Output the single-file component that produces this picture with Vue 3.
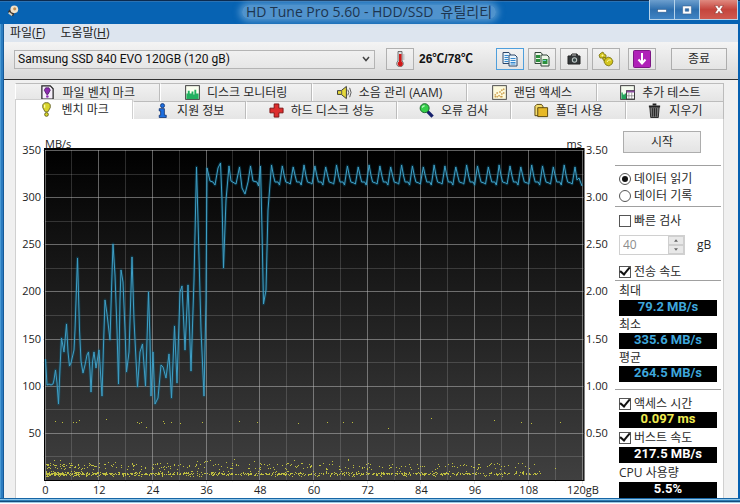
<script setup>
import { ref } from 'vue'

const drive = ref('Samsung SSD 840 EVO 120GB (120 gB)')
const mode = ref('read')
const shortTest = ref(false)
const transfer = ref(true)
const access = ref(true)
const burst = ref(true)

const backTabs = [
  { icon: 'file', label: '파일 벤치 마크' },
  { icon: 'monitor', label: '디스크 모니터링' },
  { icon: 'sound', label: '소음 관리 (AAM)' },
  { icon: 'random', label: '랜덤 액세스' },
  { icon: 'extra', label: '추가 테스트' },
]
const frontTabs = [
  { icon: 'bench', label: '벤치 마크' },
  { icon: 'info', label: '지원 정보' },
  { icon: 'health', label: '하드 디스크 성능' },
  { icon: 'search', label: '오류 검사' },
  { icon: 'folder', label: '폴더 사용' },
  { icon: 'trash', label: '지우기' },
]

const X0 = 45.5
const Y0 = 480
const xOf = (gb) => X0 + gb * 4.475
const yOf = (mb) => Y0 - mb * 0.943

const xLabels = [0, 12, 24, 36, 48, 60, 72, 84, 96, 108]
const yLabels = [50, 100, 150, 200, 250, 300, 350]
const xLines = Array.from({ length: 21 }, (_, i) => ({ x: Math.round(xOf(i * 6)) - 0.5, major: i % 2 === 0 }))
const yLines = Array.from({ length: 14 }, (_, i) => ({ y: Math.round(yOf((i + 1) * 25)) + 0.5, major: i % 2 === 1 }))

const points = [
  [45.5, 359], [47, 385], [49, 384], [51, 385], [53, 384], [54, 380], [55.5, 370], [57, 383], [58.5, 404],
  [60, 368], [61.5, 338], [64, 352], [66.5, 324], [68, 352], [69.5, 366], [71, 363], [74, 350], [75, 330],
  [77.5, 258], [79.5, 330], [81, 361], [83, 373], [85, 365], [87, 355], [88.5, 352], [90, 370], [91, 392],
  [92.5, 362], [94, 352], [96, 368], [99, 350], [100, 365], [102, 396], [103.5, 345], [105, 300], [107, 314],
  [110, 340], [111.5, 290], [113, 244], [115, 275], [117, 330], [118.5, 384], [120, 300], [121, 270], [123, 282],
  [125, 330], [126.5, 372], [129, 352], [131, 290], [132, 257], [134, 320], [136, 360], [137.5, 387],
  [140, 352], [142.5, 344], [144, 365], [145.5, 386], [147, 340], [148.5, 292], [150, 340], [151, 396],
  [153, 352], [155, 404], [158, 398], [161, 365], [163, 367], [166, 378], [169, 354], [171.5, 398],
  [174.5, 326], [177, 383], [180, 292], [182, 286], [185, 350], [188, 285], [191, 371], [194, 280],
  [196.5, 167], [198, 220], [201, 330], [204, 396], [206, 300], [207, 168], [210, 181], [213, 182], [215, 185],
  [218, 168], [220.5, 163], [222, 200], [223.5, 268], [226, 200], [229, 166], [231, 181], [236, 184],
  [239.5, 167], [242, 188], [245, 194], [248, 182], [250.5, 166], [253, 181], [257, 182], [258.5, 186],
  [260.5, 166], [262, 230], [263.5, 304], [266, 290], [268, 210],
]
for (let i = 0; i < 28; i++) {
  const x = 271.5 + i * 10.84
  points.push([x, 165 + (i % 3)], [x + 2, 176], [x + 3.5, 182], [x + 6.5, 182 + (i % 2)], [x + 8, 185 - (i % 2)], [x + 9.5, 175])
}
points.push([575, 167], [577, 180], [579, 178], [582, 186])
const speedLine = points.map((p) => p.map((n) => n.toFixed(1)).join(',')).join(' ')

let seed = 97
const rand = () => {
  seed = (seed * 16807) % 2147483647
  return seed / 2147483647
}
const dots = []
for (let i = 0; i < 1150; i++) {
  const x = 46 + Math.pow(rand(), 1.5) * 495
  const band = rand()
  const y = band < 0.45 ? 473 + Math.floor(rand() * 2) : band < 0.78 ? 471 + rand() * 5 : 463 + rand() * 6
  dots.push([Math.round(x), Math.round(y)])
}
for (let i = 0; i < 16; i++) dots.push([Math.round(50 + rand() * 430), Math.round(459 + rand() * 3)])
dots.push(
  [55, 421], [62, 422], [73, 422], [76, 422], [79, 420], [106, 419], [137, 422], [139, 423], [141, 422], [146, 427],
  [163, 421], [164, 423], [171, 422], [180, 423], [202, 422], [239, 421], [257, 422], [298, 423], [327, 422],
  [343, 422], [352, 422], [388, 428], [431, 418], [494, 420], [521, 422], [531, 423], [560, 422], [555, 468],
)
const dotPath = dots.map(([x, y]) => `M${x} ${y}h1v1h-1z`).join('')
</script>

<template>
  <div class="window">
    <header class="titlebar">
      <svg class="app-icon" viewBox="0 0 14 14" aria-hidden="true">
        <path d="M1 8l5-6 5 3-4 8z" fill="#3c342e" />
        <circle cx="8.500" cy="5" r="4.500" fill="#eee0c8" /><circle cx="9" cy="4.500" r="1.800" fill="#c08e50" />
        <path d="M2 9l4 3" stroke="#d9d2c0" stroke-width="2" />
      </svg>
      <h1 class="title">HD Tune Pro 5.60 - HDD/SSD&nbsp; 유틸리티</h1>
      <div class="win-controls">
        <button type="button" aria-label="최소화">
          <svg viewBox="0 0 16 14"><rect x="3" y="7" width="10" height="3" fill="#fff" stroke="#335b88" stroke-width=".6" /></svg>
        </button>
        <button type="button" aria-label="최대화">
          <svg viewBox="0 0 16 14"><path d="M3 3h10v9H3zM6 6v3h4V6z" fill="#fff" fill-rule="evenodd" stroke="#335b88" stroke-width=".6" /></svg>
        </button>
        <button type="button" class="close" aria-label="닫기">
          <svg viewBox="0 0 16 14"><path d="M3 2.500h3.500L8 5l1.500-2.500H13L10 7l3 4.500H9.500L8 9l-1.500 2.500H3L6 7z" fill="#fff" stroke="#7a2622" stroke-width=".6" /></svg>
        </button>
      </div>
    </header>

    <div class="client">
      <nav class="menu">
        <a href="#file">파일(<u>F</u>)</a>
        <a href="#help">도움말(<u>H</u>)</a>
      </nav>

      <div class="toolbar">
        <div class="combo">
          <select v-model="drive" aria-label="드라이브">
            <option>Samsung SSD 840 EVO 120GB (120 gB)</option>
          </select>
          <svg viewBox="0 0 8 6" aria-hidden="true"><path d="M1 1l3 3.500L7 1" fill="none" stroke="#444" stroke-width="1.500" /></svg>
        </div>
        <button type="button" class="tool" aria-label="온도">
          <svg viewBox="0 0 16 16"><path d="M6 .5h4V10a3.300 3.300 0 1 1-4 0z" fill="#ddd" stroke="#555" stroke-width=".8" /><path d="M7 3h2.500v7.500a2.600 2.600 0 1 1-2.500 0z" fill="#d01818" /><path d="M10.500 4h2M10.500 6h2M10.500 8h2" stroke="#888" stroke-width=".7" /></svg>
        </button>
        <span class="temp">26℃/78℃</span>
        <div class="tools">
          <button type="button" class="tool focus" aria-label="텍스트 복사">
            <svg viewBox="0 0 16 16"><g fill="#e8f3fb" stroke="#2d4668"><path d="M1 1.500h6l1.500 2v9H1z" /><path d="M7 4h6l2 2v9H7z" /></g><path d="M2.500 4.500h4M2.500 6.500h4M2.500 8.500h4M2.500 10.500h4M8.500 7.500h5M8.500 9.500h5M8.500 11.500h5M8.500 13h5" stroke="#3689cf" /></svg>
          </button>
          <button type="button" class="tool" aria-label="그림 복사">
            <svg viewBox="0 0 16 16"><g fill="#edf6e8" stroke="#33443a"><path d="M1 1.500h6l1.500 2v9H1z" /><path d="M7 4h6l2 2v9H7z" /></g><path d="M2 4h4v3H2zM2 8h4v3H2zM8.500 8h5v5h-5z" fill="#2c8f3d" /><path d="M9 9h3v1H9z" fill="#6bc7d8" /></svg>
          </button>
          <button type="button" class="tool" aria-label="화면 저장">
            <svg viewBox="0 0 16 16"><path d="M2 5h3l1-2h5l1 2h2v8H2z" fill="#34383a" stroke="#222" stroke-linejoin="round" /><circle cx="8.500" cy="9" r="2.700" fill="#c2cac9" /><circle cx="8.500" cy="9" r="1.700" fill="#3c4d4d" /><path d="M6 4h4" stroke="#bbb" /></svg>
          </button>
          <button type="button" class="tool" aria-label="설정">
            <svg viewBox="0 0 16 16"><g fill="#d3c51e" stroke="#77700f" stroke-width=".8"><path d="M1 4l2-2 2-1 1 2 2 1v3L6 8 4 7 2 7z" /><path d="M5 6l3 1 1 2-2 1-2-1z" /><path d="M7 8l3-2 3 1 2 3-1 3-3 2-3-1-2-3z" /></g><circle cx="4.500" cy="4.500" r="1" fill="#fff8a0" /><path d="M9 11q1-3 4-2" fill="none" stroke="#fff8a0" /></svg>
          </button>
        </div>
        <button type="button" class="tool" aria-label="저장">
          <svg class="large" viewBox="0 0 18 18"><rect x=".5" y=".5" width="17" height="17" rx="1" fill="#b020b8" stroke="#7c1684" /><path d="M9 3v10M5.500 9.500L9 13.500l3.500-4" fill="none" stroke="#fff" stroke-width="2" /></svg>
        </button>
        <button type="button" class="push exit">종료</button>
      </div>

      <main class="body">
        <div class="tabs back" role="tablist">
          <button v-for="t in backTabs" :key="t.icon" type="button" role="tab">
            <svg viewBox="0 0 16 16" aria-hidden="true">
              <g v-if="t.icon === 'file'"><path d="M2 1h9l3 3v11H2z" fill="#f5eefa" stroke="#222" stroke-width="1.300" /><path d="M6 3h3.500L11 5.500 8.500 10H7L4.500 5.500z" fill="#8d2bb0" stroke="#35104a" stroke-width=".7" /><circle cx="7.800" cy="12.300" r="1.400" fill="#8d2bb0" /></g>
              <g v-else-if="t.icon === 'monitor'"><rect x=".7" y=".7" width="14.600" height="14.600" fill="#fbfff0" stroke="#333" /><path d="M1.500 15V9H3V6h2v3h2V7h2v3h1V5h2v4h2.500v6z" fill="#21b060" /></g>
              <g v-else-if="t.icon === 'sound'"><path d="M0.500 6h4L10 1.500v13L4.500 10h-4z" fill="#e6d93a" stroke="#333" /><path d="M5 6v4" stroke="#555" /><path d="M11.500 5q2 3 0 6M13.500 3q3 5 0 10" fill="none" stroke="#555" /></g>
              <g v-else-if="t.icon === 'random'"><rect x=".7" y=".7" width="14.600" height="14.600" fill="#fdfadc" stroke="#444" /><path d="M3 10h1v1H3zM5 8h1v1H5zM5 12h1v1H5zM7 11h1v1H7zM8 7h1v1H8zM10 5h1v1h-1zM12 4h1v1h-1zM10 9h1v1h-1zM12 8h1v1h-1zM3 12h1v1H3zM9 12h2v1H9z" fill="#c18a2c" stroke="#c18a2c" stroke-width=".4" /></g>
              <g v-else><rect x=".7" y=".7" width="14.600" height="14.600" fill="#f5fbef" stroke="#333" /><path d="M1.500 15V8H3v2h2V9h2v6z" fill="#23a45b" /><rect x="7" y="6" width="8.500" height="9" fill="#fff" stroke="#333" /><path d="M7 6h8.500v2H7z" fill="#884a9c" /><path d="M9.500 8v7M12.500 8v7M7 11.500h8" stroke="#777" stroke-width=".7" /></g>
            </svg>
            {{ t.label }}
          </button>
        </div>
        <div class="tabs front" role="tablist">
          <button v-for="t in frontTabs" :key="t.icon" type="button" role="tab" :class="{ active: t.icon === 'bench' }" :aria-selected="t.icon === 'bench'">
            <svg viewBox="0 0 16 16" aria-hidden="true">
              <g v-if="t.icon === 'bench'" stroke="#4c4a10" stroke-width=".8"><path d="M6 .8h4L12 3v3l-2.500 4.500h-3L4 6V3z" fill="#d9d52c" /><circle cx="8" cy="13.300" r="2" fill="#d9d52c" /><path d="M6 3v3" stroke="#fffcb0" stroke-width="1.300" /></g>
              <g v-else-if="t.icon === 'info'" fill="#1d6fe0" stroke="#0b2a66" stroke-width=".8"><circle cx="8" cy="2.800" r="2.200" /><path d="M4.500 6H10v7h2v2.500H4.500V13H6V8.500H4.500z" /></g>
              <path v-else-if="t.icon === 'health'" d="M5.500 1h5v4.500H15v5h-4.500V15h-5v-4.500H1v-5h4.500z" fill="#dd2d2d" stroke="#7a1111" />
              <g v-else-if="t.icon === 'search'"><path d="M9 9l5.500 5.500" stroke="#16206c" stroke-width="3.500" /><circle cx="6" cy="5.500" r="4.800" fill="#35cf4a" stroke="#19602a" /><path d="M3.500 5q.5-2 2.500-2" fill="none" stroke="#c8ffd0" stroke-width="1.300" /></g>
              <g v-else-if="t.icon === 'folder'" stroke="#55430d"><path d="M1 3.500L3 1.500h5l1.500 2v10H1z" fill="#f4dc6c" /><path d="M4 5h10.500v9.500H4z" fill="#e7b928" /></g>
              <g v-else><path d="M3 4h10l-1 11.500H4z" fill="#777" stroke="#222" /><path d="M2 3.500h12M6 1.500h4" stroke="#222" stroke-width="1.800" /><path d="M6 5.500v9M8 5.500v9M10 5.500v9" stroke="#222" /></g>
            </svg>
            {{ t.label }}
          </button>
        </div>

        <section class="panel">
          <svg class="chart" viewBox="16 119 596 378" role="img" aria-label="전송 속도와 액세스 시간">
            <defs>
              <linearGradient id="plot-bg" x1="0" y1="0" x2="0" y2="1">
                <stop offset="0" stop-color="#000" /><stop offset=".5" stop-color="#202020" /><stop offset="1" stop-color="#404040" />
              </linearGradient>
            </defs>
            <g class="axis">
              <text x="45" y="148">MB/s</text>
              <text x="582" y="148" text-anchor="end">ms</text>
            </g>
            <rect x="44" y="148" width="540" height="333" fill="url(#plot-bg)" />
            <line v-for="l in xLines" :key="'x' + l.x" :x1="l.x" :x2="l.x" y1="150" :y2="l.major ? 484 : 482" :class="['grid', { major: l.major }]" />
            <line v-for="l in yLines" :key="'y' + l.y" :y1="l.y" :y2="l.y" x1="43" x2="585" :class="['grid', { major: l.major }]" />
            <path d="M44.500 148V480.500H584M44 148.500H584M584 148v333" fill="none" stroke="#000" />
            <polyline :points="speedLine" class="glow" />
            <polyline :points="speedLine" class="speed" />
            <path :d="dotPath" fill="#d6d640" fill-opacity=".85" shape-rendering="crispEdges" />
            <g class="axis">
              <text v-for="v in yLabels" :key="'l' + v" x="41" :y="yOf(v) + 4" text-anchor="end">{{ v }}</text>
              <text v-for="v in yLabels" :key="'r' + v" x="586" :y="yOf(v) + 4">{{ (v / 100).toFixed(2) }}</text>
              <text v-for="v in xLabels" :key="'b' + v" :x="xOf(v)" y="494" text-anchor="middle">{{ v }}</text>
              <text x="567" y="494">120gB</text>
            </g>
          </svg>

          <aside class="side">
            <button type="button" class="push start">시작</button>
            <div class="group modes">
              <label><input v-model="mode" type="radio" name="mode" value="read" />데이터 읽기</label>
              <label><input v-model="mode" type="radio" name="mode" value="write" />데이터 기록</label>
            </div>
            <div class="group quick">
              <label><input v-model="shortTest" type="checkbox" />빠른 검사</label>
              <div class="amount">
                <div class="spinner">
                  <input type="text" value="40" disabled aria-label="검사 크기" />
                  <div class="steps">
                    <button type="button" disabled aria-label="증가"><svg viewBox="0 0 6 4"><path d="M0 4l3-4 3 4z" fill="#666" /></svg></button>
                    <button type="button" disabled aria-label="감소"><svg viewBox="0 0 6 4"><path d="M0 0l3 4 3-4z" fill="#666" /></svg></button>
                  </div>
                </div>
                <span>gB</span>
              </div>
              <label><input v-model="transfer" type="checkbox" />전송 속도</label>
            </div>
            <div class="group speeds">
              <p class="tall">최대</p><output class="blue">79.2 MB/s</output>
              <p>최소</p><output class="blue">335.6 MB/s</output>
              <p>평균</p><output class="blue">264.5 MB/s</output>
            </div>
            <div class="group extras">
              <label><input v-model="access" type="checkbox" />액세스 시간</label><output class="yellow">0.097 ms</output>
              <label class="tall"><input v-model="burst" type="checkbox" />버스트 속도</label><output>217.5 MB/s</output>
              <p class="tall">CPU 사용량</p><output>5.5%</output>
            </div>
          </aside>
        </section>
      </main>
    </div>
  </div>
</template>

<style>
body {
  margin: 0;
  background: #fff;
}
</style>

<style scoped>
* {
  box-sizing: border-box;
}
.window {
  font: 12px/16px "Open Sans", "Noto Sans CJK KR", sans-serif;
  color: #2a2a2a;
  padding: 0 2px 6px 4px;
  background:
    linear-gradient(#1766a5 0 1px, #8fc6ea 1px 2px, #2d7db5 2px 3px, #134d7c 3px 4px, #9cc9e6 4px 5px, #fff 5px) bottom / 100% 6px no-repeat,
    linear-gradient(90deg, #4a9ad4 0 1px, #2b7cc0 1px 3px, #155a98 3px 4px, #0660b0 4px);
}
button {
  font: inherit;
  color: inherit;
  padding: 0;
  border-radius: 0;
}
.titlebar {
  height: 24px;
  margin: 0 -2px 0 -4px;
  display: grid;
  grid-template-columns: 89px 1fr 89px;
  padding-right: 2px;
  align-items: start;
  background: linear-gradient(#0b2b50 0 1px, #2a72b4 1px 2px, #0763b3 2px);
}
.app-icon {
  width: 12px;
  height: 12px;
  margin: 5px 0 0 7px;
}
.title {
  justify-self: center;
  margin: 5px 0 0;
  padding: 0 4px;
  font: 14px/14px "Open Sans", "Noto Sans CJK KR", sans-serif;
  white-space: nowrap;
  color: #1c3550;
  background: rgba(140, 188, 226, 0.55);
  box-shadow: 0 0 6px 3px rgba(140, 188, 226, 0.55);
  border-radius: 8px;
}
.win-controls {
  display: grid;
  grid-template-columns: 25px 25px 1fr;
  height: 20px;
  border: 1px solid #b6d3ea;
  border-top: 0;
}
.win-controls button {
  border: 0;
  border-right: 1px solid #b6d3ea;
  background: linear-gradient(#6d9fce, #2e6fae 50%, #3f84c4);
}
.win-controls .close {
  border-right: 0;
  background: linear-gradient(#e08a80, #c5453d 50%, #cf5a50);
}
.win-controls svg {
  display: block;
  width: 14px;
  height: 13px;
  margin: 0 auto;
}
.menu {
  display: flex;
  gap: 15px;
  height: 18px;
  padding: 0 6px;
  line-height: 18px;
  background: #dde5ef;
}
.menu a {
  color: #222;
  text-decoration: none;
}
.toolbar {
  display: flex;
  align-items: center;
  height: 37px;
  padding: 0 11px 3px 10px;
  background: linear-gradient(#f4f4f4, #d9d9d9);
}
.combo {
  flex: 1;
  display: grid;
  align-items: center;
  height: 19px;
  margin-right: 11px;
  border: 1px solid #b4b4b4;
  background: linear-gradient(#f0f0f0, #e6e6e6);
}
.combo select,
.combo svg {
  grid-area: 1 / 1;
}
.combo select {
  width: 100%;
  height: 17px;
  appearance: none;
  border: 0;
  padding: 0 20px 0 3px;
  background: transparent;
  font: 12px/16px Roboto, sans-serif;
  color: #111;
}
.combo svg {
  justify-self: end;
  width: 8px;
  height: 6px;
  margin-right: 4px;
  pointer-events: none;
}
.tool {
  display: grid;
  place-items: center;
  width: 28px;
  height: 22px;
  border: 1px solid #b0b0b0;
  background: linear-gradient(#f2f2f2, #e4e4e4);
}
.tool svg {
  width: 16px;
  height: 16px;
}
.tool .large {
  width: 18px;
  height: 18px;
}
.tool.focus {
  border-color: #4f9fdc;
}
.temp {
  width: 82px;
  padding-left: 5px;
  font: bold 12px/16px "Liberation Sans", "Noto Sans CJK KR", sans-serif;
  color: #111;
  white-space: nowrap;
}
.tools {
  display: flex;
  gap: 4px;
  margin-right: 8px;
}
.push {
  height: 22px;
  border: 1px solid #adadad;
  background: linear-gradient(#f2f2f2, #e4e4e4);
}
.exit {
  width: 56px;
  margin-left: 15px;
}
.body {
  padding: 3px 14px 0 11px;
  border-top: 1px solid #333;
  background: #f0f0f0;
}
.tabs {
  display: grid;
}
.back {
  grid-template-columns: 145fr 151fr 155fr 129fr 127fr;
  height: 18px;
}
.front {
  grid-template-columns: 118fr 113fr 150fr 114fr 115fr 98fr;
  height: 18px;
}
.tabs button {
  display: flex;
  align-items: center;
  justify-content: center;
  gap: 7px;
  border: 1px solid #bcbcbc;
  border-left-color: #fff;
  border-bottom: 0;
  background: linear-gradient(#f1f1f1, #e5e5e5);
  white-space: nowrap;
  line-height: 14px;
}
.tabs svg {
  width: 15px;
  height: 15px;
}
.tabs .active {
  margin-top: -2px;
  border-color: #d0d0d0;
  background: #fff;
}
.tabs .active,
.front {
  position: relative;
}
.panel {
  display: grid;
  grid-template-columns: 1fr 111px;
  align-items: start;
  border: solid #d0d0d0;
  border-width: 0 1px;
  background: #fff;
}
.chart {
  display: block;
  width: 100%;
}
.axis {
  font: 11px "Open Sans", sans-serif;
  fill: #222;
}
.grid {
  stroke: #c0c0c0;
  stroke-opacity: 0.22;
}
.grid.major {
  stroke-opacity: 0.5;
}
.speed,
.glow {
  fill: none;
  stroke: #3f9fc6;
  stroke-linejoin: round;
}
.glow {
  stroke: #087198;
  stroke-width: 3;
  stroke-opacity: 0.3;
}
.side {
  padding: 12px 2px 0 3px;
}
.start {
  display: block;
  width: 78px;
  margin: 0 0 12px 8px;
}
.group {
  display: flex;
  flex-direction: column;
  padding: 0 4px;
  border-top: 1px solid #a0a0a0;
}
.modes {
  padding-top: 4px;
  padding-bottom: 2px;
}
.quick {
  padding-top: 5px;
}
.speeds {
  padding-bottom: 7px;
}
.extras {
  padding-top: 5px;
}
.group label,
.group p {
  display: flex;
  align-items: center;
  gap: 3px;
  height: 17px;
  margin: 0;
  white-space: nowrap;
}
.group .tall {
  height: 19px;
}
.group label input {
  appearance: none;
  display: grid;
  place-items: center;
  width: 12px;
  height: 12px;
  margin: 0;
  border: 1px solid #555;
  background: #fff;
}
.group input[type="radio"] {
  border-radius: 50%;
}
.group input[type="radio"]:checked::after {
  content: "";
  width: 6px;
  height: 6px;
  border-radius: 50%;
  background: #111;
}
.group input[type="checkbox"]:checked::after {
  content: "";
  width: 4px;
  height: 8px;
  margin-top: -3px;
  border: solid #111;
  border-width: 0 2px 2px 0;
  transform: rotate(40deg);
}
.amount {
  display: flex;
  align-items: center;
  gap: 12px;
  margin: 6px 0 8px;
}
.spinner {
  display: flex;
  width: 66px;
  height: 20px;
  border: 1px solid #d0d0d0;
}
.spinner input {
  flex: 1;
  min-width: 0;
  padding: 0 3px;
  border: 0;
  background: #fff;
  font: 12px/16px "Open Sans", sans-serif;
  color: #8c8c8c;
}
.steps {
  display: grid;
  grid-template-rows: 1fr 1fr;
  width: 16px;
}
.steps button {
  display: grid;
  place-items: center;
  border: 1px solid #cfcfcf;
  background: #e8e8e8;
}
.steps svg {
  width: 4px;
  height: 3px;
}
output {
  display: block;
  height: 16px;
  background: #000;
  font: bold 13px/13px Roboto, sans-serif;
  text-align: center;
  color: #fff;
}
output.blue {
  color: #3ea7dc;
}
output.yellow {
  color: #f0ec50;
}
</style>
